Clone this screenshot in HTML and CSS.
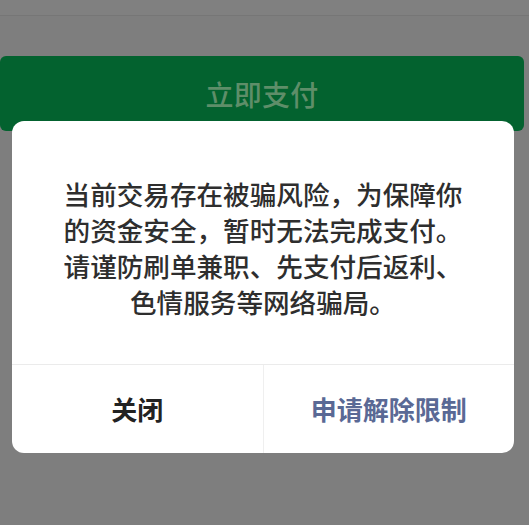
FILE: index.html
```html
<!DOCTYPE html>
<html lang="zh-CN">
<head>
<meta charset="utf-8">
<link rel="stylesheet" href="styles.css">
</head>
<body>
<div class="screen">
  <div class="topbar"></div>
  <div class="pay-btn">立即支付</div>
  <div class="dialog">
    <div class="dialog-body">当前交易存在被骗风险，为保障你<br>的资金安全，暂时无法完成支付。<br>请谨防刷单兼职、先支付后返利、<br>色情服务等网络骗局。</div>
    <div class="dialog-actions">
      <div class="action action-close">关闭</div>
      <div class="action action-apply">申请解除限制</div>
    </div>
  </div>
</div>
</body>
</html>
```
FILE: styles.css
```css
html, body {
  margin: 0;
  padding: 0;
}
body {
  background: #7e7e7e;
  font-family: "Noto Sans CJK SC", "Noto Sans", sans-serif;
}
.screen {
  position: relative;
  width: 529px;
  height: 525px;
  overflow: hidden;
  background: #7e7e7e;
}
.topbar {
  height: 15px;
  background: #808080;
  border-bottom: 1px solid #767676;
}
.pay-btn {
  margin-top: 40px;
  width: 524px;
  height: 75px;
  box-sizing: border-box;
  padding-top: 19px;
  background: #03622f;
  border-radius: 6px;
  color: #5e8e69;
  font-size: 28px;
  font-weight: 500;
  line-height: 38px;
  text-align: center;
  letter-spacing: 0.3px;
}
.dialog {
  position: absolute;
  left: 12px;
  top: 121px;
  width: 502px;
  height: 332px;
  background: #ffffff;
  border-radius: 12px;
  display: flex;
  flex-direction: column;
  overflow: hidden;
}
.dialog-body {
  height: 244px;
  box-sizing: border-box;
  padding-top: 55px;
  text-align: center;
  font-size: 26.6px;
  font-weight: 500;
  line-height: 36px;
  color: #2e2e2e;
  border-bottom: 1px solid #ebebeb;
}
.dialog-actions {
  flex: 1;
  display: flex;
}
.action {
  flex: 1;
  display: flex;
  align-items: center;
  justify-content: center;
  font-size: 26px;
  font-weight: 700;
  padding-bottom: 2px;
}
.action-close {
  color: #222222;
  border-right: 1px solid #efefef;
}
.action-apply {
  color: #5a6995;
}
```
